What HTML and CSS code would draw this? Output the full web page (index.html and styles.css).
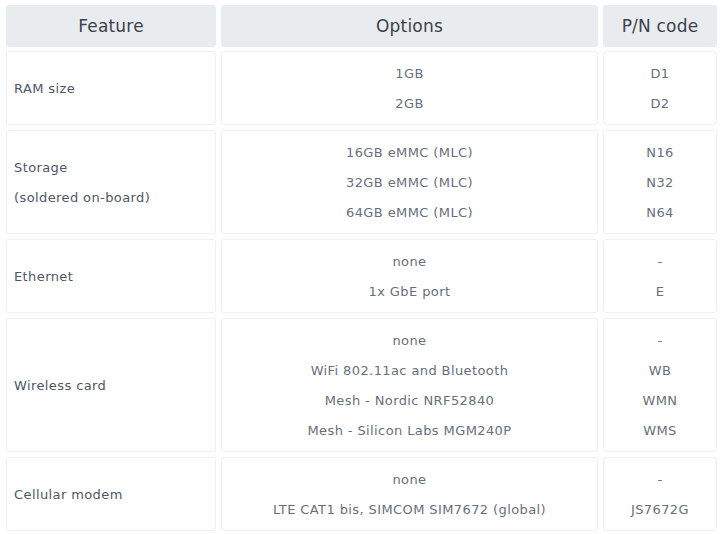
FILE: index.html
```html
<!DOCTYPE html>
<html lang="en">
<head>
<meta charset="utf-8">
<title>Options</title>
<link rel="stylesheet" href="styles.css">
</head>
<body>
<div class="grid">
  <div class="cell head">Feature</div>
  <div class="cell head">Options</div>
  <div class="cell head">P/N code</div>

  <div class="cell feat"><span>RAM size</span></div>
  <div class="cell opt"><span>1GB</span><span>2GB</span></div>
  <div class="cell opt"><span>D1</span><span>D2</span></div>

  <div class="cell feat"><span>Storage</span><span>(soldered on-board)</span></div>
  <div class="cell opt"><span>16GB eMMC (MLC)</span><span>32GB eMMC (MLC)</span><span>64GB eMMC (MLC)</span></div>
  <div class="cell opt"><span>N16</span><span>N32</span><span>N64</span></div>

  <div class="cell feat"><span>Ethernet</span></div>
  <div class="cell opt"><span>none</span><span>1x GbE port</span></div>
  <div class="cell opt"><span>-</span><span>E</span></div>

  <div class="cell feat"><span>Wireless card</span></div>
  <div class="cell opt"><span>none</span><span>WiFi 802.11ac and Bluetooth</span><span>Mesh - Nordic NRF52840</span><span>Mesh - Silicon Labs MGM240P</span></div>
  <div class="cell opt"><span>-</span><span>WB</span><span>WMN</span><span>WMS</span></div>

  <div class="cell feat"><span>Cellular modem</span></div>
  <div class="cell opt"><span>none</span><span>LTE CAT1 bis, SIMCOM SIM7672 (global)</span></div>
  <div class="cell opt"><span>-</span><span>JS7672G</span></div>
</div>
</body>
</html>
```
FILE: styles.css
```css
html, body {
  margin: 0;
  padding: 0;
  background: #ffffff;
}
body {
  font-family: "DejaVu Sans", "Open Sans", sans-serif;
  padding: 5px 0 0 6px;
}
.grid {
  display: grid;
  grid-template-columns: 210px 377px 114px;
  column-gap: 5px;
  row-gap: 5px;
}
.cell {
  box-sizing: border-box;
  border-radius: 3px;
  display: flex;
  flex-direction: column;
  justify-content: center;
}
.head {
  background: #e9ecef;
  height: 42px;
  align-items: center;
  font-size: 17px;
  letter-spacing: 0.2px;
  color: #3c414c;
  margin-bottom: -1px;
}
.feat, .opt {
  border: 1px solid #eef0f2;
  padding: 7px 7px 5px;
}
.feat span, .opt span {
  display: block;
  line-height: 30px;
  font-size: 13px;
  letter-spacing: 0.4px;
}
.feat {
  align-items: flex-start;
  color: #4e5666;
}
.opt {
  align-items: center;
  color: #686f7c;
}
```
